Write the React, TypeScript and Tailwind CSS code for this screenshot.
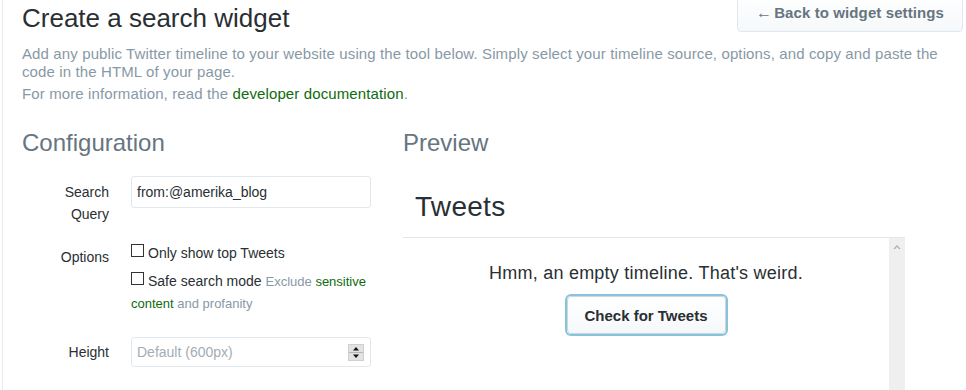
import React from "react";

function Checkbox() {
  return (
    <span className="inline-block w-[13px] h-[13px] border border-[#333333] bg-white align-[1px] mr-[4px]" />
  );
}

function Spinner() {
  return (
    <svg width="16" height="17" viewBox="0 0 16 17" className="block">
      <rect x="0" y="0" width="16" height="17" fill="#e3e3e3" />
      <rect x="0.5" y="0.5" width="15" height="16" fill="none" stroke="#d0d0d0" />
      <line x1="1" y1="8.5" x2="15" y2="8.5" stroke="#b5b5b5" />
      <path d="M5 6.5 L11 6.5 L8 3 Z" fill="#111" />
      <path d="M5 10.5 L11 10.5 L8 14 Z" fill="#111" />
    </svg>
  );
}

export default function App() {
  return (
    <div className="bg-white w-[966px] min-h-[390px] pl-[2px] pr-[3px] font-['Liberation_Sans',Arial,sans-serif] overflow-hidden">
      <div className="border-l border-[#e6ecf0] pl-[19px] min-h-[390px]">
        {/* Header */}
        <div className="flex items-start justify-between">
          <h1 className="text-[26px] leading-[37px] text-[#292f33] font-normal">
            Create a search widget
          </h1>
          <button className="-mt-[6px] h-[38px] pl-[18px] pr-[18px] rounded-[4px] border border-[#e1e8ed] bg-gradient-to-b from-white to-[#f5f8fa] text-[15px] font-bold text-[#66757f] leading-none tracking-[0.1px]">
            <span className="text-[16px] font-normal mr-[2px]">←</span>Back to widget settings
          </button>
        </div>
        <p className="mt-[8px] text-[15px] leading-[18px] text-[#8899a6] tracking-[0.12px]">
          Add any public Twitter timeline to your website using the tool below. Simply select your timeline source,
          options, and copy and paste the code in the HTML of your page.
        </p>
        <p className="mt-[4px] text-[15px] leading-[18px] text-[#8899a6] tracking-[0.12px]">
          For more information, read the <span className="text-[#0d6b0d]">developer documentation</span>.
        </p>

        {/* Columns */}
        <div className="flex mt-[25px]">
          {/* Configuration */}
          <div className="w-[381px] shrink-0">
            <h2 className="text-[24px] leading-[30px] text-[#66757f] font-normal">Configuration</h2>
            <div className="mt-[18px]">
              <div className="flex items-start">
                <div className="w-[87px] pl-[5px] pt-[5px] text-right text-[14px] leading-[22px] text-[#292f33]">
                  Search Query
                </div>
                <div className="ml-[22px] w-[240px] h-[32px] border border-[#e1e8ed] rounded-[3px] flex items-center pl-[5px] text-[14px] text-[#292f33]">
                  from:@amerika_blog
                </div>
              </div>

              <div className="flex items-start mt-[17px]">
                <div className="w-[87px] pt-[4px] text-right text-[14px] leading-[22px] text-[#292f33]">
                  Options
                </div>
                <div className="ml-[22px] w-[240px]">
                  <div className="text-[14px] leading-[22px] text-[#292f33]">
                    <Checkbox />
                    Only show top Tweets
                  </div>
                  <div className="mt-[6px] text-[14px] leading-[22px] text-[#292f33]">
                    <Checkbox />
                    Safe search mode{" "}
                    <span className="text-[13px] leading-[14px] text-[#8899a6]">
                      Exclude <span className="text-[#0d6b0d]">sensitive content</span> and profanity
                    </span>
                  </div>
                </div>
              </div>

              <div className="flex items-start mt-[23px]">
                <div className="w-[87px] pt-[4px] text-right text-[14px] leading-[22px] text-[#292f33]">
                  Height
                </div>
                <div className="ml-[22px] w-[240px] h-[30px] border border-[#e1e8ed] rounded-[3px] flex items-center justify-between pl-[5px] pr-[6px] text-[14px] text-[#a3adb5]">
                  <span>Default (600px)</span>
                  <Spinner />
                </div>
              </div>
            </div>
          </div>

          {/* Preview */}
          <div className="flex-1">
            <h2 className="text-[24px] leading-[30px] text-[#66757f] font-normal">Preview</h2>
            <div className="mt-[20px] w-[502px]">
              <div className="h-[60px] border-b border-[#e1e8ed] pl-[12px] pt-[12px]">
                <div className="text-[28px] leading-[34px] text-[#292f33] tracking-[0.3px]">Tweets</div>
              </div>
              <div className="flex h-[160px]">
                <div className="flex-1 pt-[23px] flex flex-col items-center">
                  <div className="text-[18px] leading-[24px] text-[#292f33] tracking-[0.24px]">
                    Hmm, an empty timeline. That's weird.
                  </div>
                  <button className="mt-[11px] w-[159px] h-[38px] rounded-[4px] border border-[#ccd6dd] bg-gradient-to-b from-white to-[#f5f8fa] shadow-[0_0_0_2px_#88c3dc] text-[15px] font-bold text-[#292f33] leading-none">
                    Check for Tweets
                  </button>
                </div>
                <div className="w-[16px] bg-[#efefef] flex flex-col items-center">
                  <svg width="16" height="16" viewBox="0 0 16 16" className="block">
                    <path d="M4.5 11 L8 7 L11.5 11 L10 11 L8 8.8 L6 11 Z" fill="#a8a8a8" />
                  </svg>
                </div>
              </div>
            </div>
          </div>
        </div>
      </div>
    </div>
  );
}
